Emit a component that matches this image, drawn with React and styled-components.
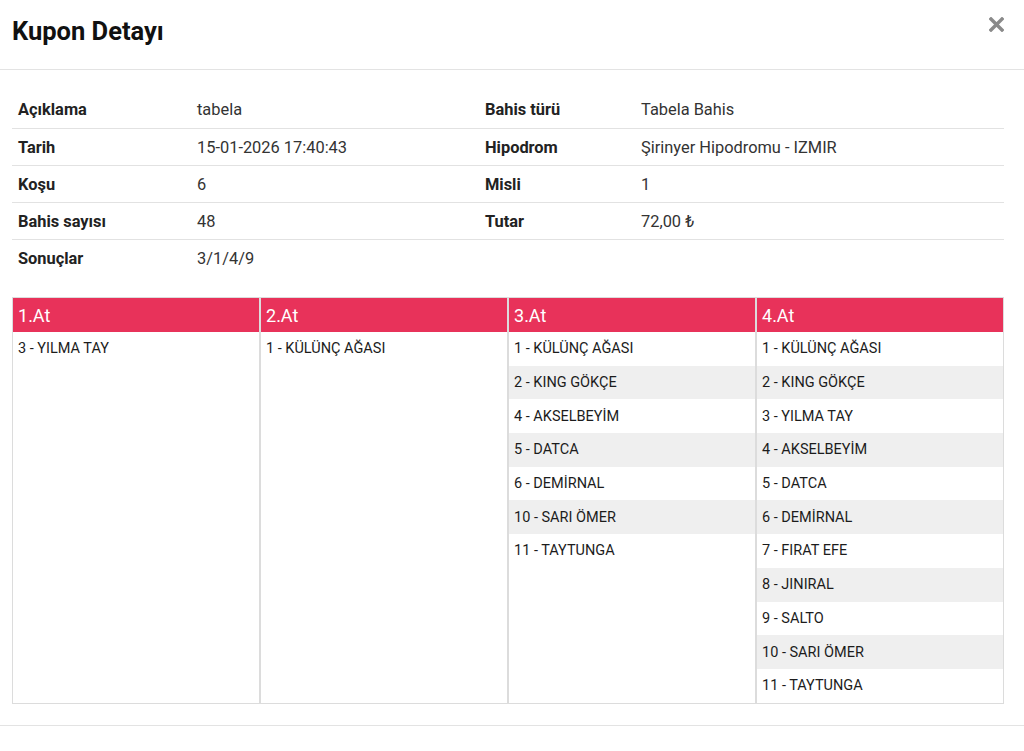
import styled, { createGlobalStyle } from "styled-components";

const GlobalStyle = createGlobalStyle`
  body {
    margin: 0;
    background: #fff;
    font-family: Roboto, "Liberation Sans", sans-serif;
    color: #222;
  }
`;

const Modal = styled.div`
  width: 1024px;
  min-height: 751px;
  background: #fff;
`;

const Header = styled.header`
  height: 70px;
  box-sizing: border-box;
  display: flex;
  align-items: center;
  justify-content: space-between;
  padding: 0 20px 8px 12px;
  border-bottom: 1px solid #e3e3e3;
  h2 {
    margin: 0;
    font-size: 25.5px;
    font-weight: 700;
    color: #111;
  }
`;

const CloseButton = styled.button`
  border: 0;
  background: none;
  padding: 0;
  margin-top: -12px;
  cursor: pointer;
  display: flex;
`;

const Body = styled.div`
  padding: 21px 20px 21px 12px;
  border-bottom: 1px solid #e3e3e3;
`;

const InfoTable = styled.div`
  display: grid;
  grid-template-columns: 179px 288px 156px 1fr;
  font-size: 16.4px;
`;

const Cell = styled.div`
  height: 37px;
  box-sizing: border-box;
  display: flex;
  align-items: center;
  padding: 0 6px;
  border-top: ${(p) => (p.$first ? "none" : "1px solid #e2e2e2")};
  font-weight: ${(p) => (p.$label ? 700 : 400)};
  color: ${(p) => (p.$label ? "#222" : "#333")};
`;

const Horses = styled.div`
  margin-top: 21px;
  display: grid;
  grid-template-columns: repeat(4, 248px);
`;

const Column = styled.div`
  border: 1px solid #dcdcdc;
`;

const ColumnHead = styled.div`
  height: 34px;
  background: #e8325a;
  color: #fff;
  font-size: 18px;
  display: flex;
  align-items: center;
  padding: 0 5px;
`;

const Horse = styled.div`
  height: 33.7px;
  display: flex;
  align-items: center;
  padding: 0 5px;
  font-size: 14.5px;
  color: #1c1c1c;
  background: ${(p) => (p.$odd ? "#efefef" : "#fff")};
`;

const info = [
  ["Açıklama", "tabela", "Bahis türü", "Tabela Bahis"],
  ["Tarih", "15-01-2026 17:40:43", "Hipodrom", "Şirinyer Hipodromu - IZMIR"],
  ["Koşu", "6", "Misli", "1"],
  ["Bahis sayısı", "48", "Tutar", "72,00 ₺"],
  ["Sonuçlar", "3/1/4/9", "", ""],
];

const legs = [
  ["3 - YILMA TAY"],
  ["1 - KÜLÜNÇ AĞASI"],
  [
    "1 - KÜLÜNÇ AĞASI",
    "2 - KING GÖKÇE",
    "4 - AKSELBEYİM",
    "5 - DATCA",
    "6 - DEMİRNAL",
    "10 - SARI ÖMER",
    "11 - TAYTUNGA",
  ],
  [
    "1 - KÜLÜNÇ AĞASI",
    "2 - KING GÖKÇE",
    "3 - YILMA TAY",
    "4 - AKSELBEYİM",
    "5 - DATCA",
    "6 - DEMİRNAL",
    "7 - FIRAT EFE",
    "8 - JINIRAL",
    "9 - SALTO",
    "10 - SARI ÖMER",
    "11 - TAYTUNGA",
  ],
];

const App = () => {
  return (
    <Modal>
      <GlobalStyle />
      <Header>
        <h2>Kupon Detayı</h2>
        <CloseButton aria-label="Kapat">
          <svg width="15" height="15" viewBox="0 0 15 15">
            <path
              d="M2 2 L13 13 M13 2 L2 13"
              stroke="#8a8a8a"
              strokeWidth="3.4"
              strokeLinecap="square"
            />
          </svg>
        </CloseButton>
      </Header>
      <Body>
        <InfoTable>
          {info.map((row, r) =>
            row.map((text, c) => (
              <Cell key={`${r}-${c}`} $first={r === 0} $label={c % 2 === 0}>
                {text}
              </Cell>
            ))
          )}
        </InfoTable>
        <Horses>
          {legs.map((horses, i) => (
            <Column key={i}>
              <ColumnHead>{i + 1}.At</ColumnHead>
              {horses.map((h, j) => (
                <Horse key={h} $odd={j % 2 === 1}>
                  {h}
                </Horse>
              ))}
            </Column>
          ))}
        </Horses>
      </Body>
    </Modal>
  );
};

export default App;
